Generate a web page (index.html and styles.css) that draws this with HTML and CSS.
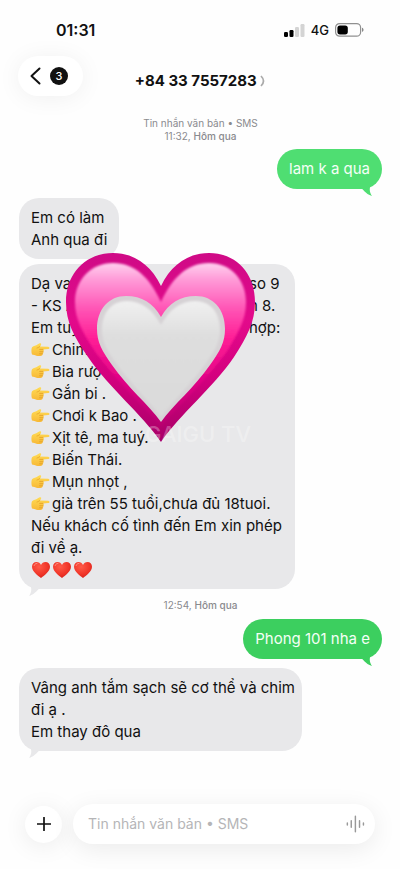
FILE: index.html
```html
<!DOCTYPE html>
<html lang="vi">
<head>
<meta charset="utf-8">
<meta name="viewport" content="width=device-width, initial-scale=1">
<title>Tin nhắn</title>
<link rel="stylesheet" href="styles.css">
</head>
<body>
<svg class="defs" aria-hidden="true">
  <defs>
    <linearGradient id="skin" x1="0" y1="0" x2="0" y2="1">
      <stop offset="0" stop-color="#ffdc55"/><stop offset="1" stop-color="#f8b936"/>
    </linearGradient>
    <radialGradient id="red" cx=".4" cy=".3" r=".8">
      <stop offset="0" stop-color="#ff5a48"/><stop offset=".6" stop-color="#f03528"/><stop offset="1" stop-color="#cf1d18"/>
    </radialGradient>
    <symbol id="hand" viewBox="0 0 19 16">
      <path d="M1 5.2C2.800 4 5 3.800 6.500 2.600C7.600 1.600 9 .9 9.900 1.400C10.800 2 9.700 3.400 8.900 4.400L17.200 4.700C18.900 4.900 18.900 7 17.200 7.100L12 7.400C13.100 7.900 13 9.300 12.100 9.700C12.700 10.500 12.300 11.500 11.500 11.800C11.900 12.700 11.300 13.600 10.300 13.700C7.500 14.200 4.700 13.600 3.200 12.900L1 12.600C.2 10.500 .2 7 1 5.200Z" fill="url(#skin)"/>
      <path d="M12 7.400H8.600M12.100 9.700H8.700M11.500 11.800H8.500M8.900 4.400C8 5.300 7 5.700 6 6" fill="none" stroke="#e09a22" stroke-width=".7" stroke-linecap="round"/>
    </symbol>
    <symbol id="love" viewBox="0 0 20 18">
      <path d="M10 17C7 14.800 1 10.700 1 5.800C1 3 3 1 5.500 1C7.600 1 9.200 2.200 10 4C10.800 2.200 12.400 1 14.500 1C17 1 19 3 19 5.800C19 10.700 13 14.800 10 17Z" fill="url(#red)"/>
      <path d="M3.200 4.400C3.700 3 4.700 2.500 5.900 2.500" fill="none" stroke="#ff9b8c" stroke-width="1" stroke-linecap="round"/>
    </symbol>
    <symbol id="tail" viewBox="0 0 16 14">
      <path d="M0 5C4 6 6 12 13 14C10 10 10 5 13 0H0Z" fill="currentColor"/>
    </symbol>
  </defs>
</svg>

<div class="phone">
  <div class="status">
    <time>01:31</time>
    <div class="signals">
      <svg class="bars" viewBox="0 0 21 13" aria-hidden="true">
        <rect x="0" y="8" width="4" height="5" rx="1.200"/>
        <rect x="5.500" y="6" width="4" height="7" rx="1.200"/>
        <rect class="off" x="11" y="3" width="4" height="10" rx="1.200"/>
        <rect class="off" x="16.500" y="0" width="4" height="13" rx="1.200"/>
      </svg>
      <span>4G</span>
      <svg class="battery" viewBox="0 0 29 14" aria-hidden="true">
        <rect x=".6" y=".6" width="25" height="12.600" rx="4" fill="none" stroke="#909090" stroke-width="1.200"/>
        <rect x="2.400" y="2.400" width="10.400" height="9" rx="2.600"/>
        <path d="M27 4.800C29 5.500 29 8.300 27 9Z" fill="#888"/>
      </svg>
    </div>
  </div>

  <header class="top">
    <button class="back" aria-label="Quay lại">
      <svg viewBox="0 0 11 18" aria-hidden="true"><path d="M9.500 1.500L1.500 9L9.500 16.500" fill="none" stroke="#111" stroke-width="2" stroke-linecap="round" stroke-linejoin="round"/></svg>
      <span class="count">3</span>
    </button>
    <a class="contact" href="#">+84 33 7557283
      <svg viewBox="0 0 5 12" aria-hidden="true"><path d="M1 1C4.500 4.500 4.500 7.500 1 11" fill="none" stroke="#aaa" stroke-width="1.700"/></svg>
    </a>
  </header>

  <main class="thread">
    <p class="stamp"><span>Tin nhắn văn bản • SMS</span><span>11:32, <b>Hôm qua</b></span></p>

    <div class="bubble sent light">lam k a qua<svg class="tail" aria-hidden="true"><use href="#tail"/></svg></div>

    <div class="bubble got">Em có làm<br>Anh qua đi</div>

    <div class="bubble got rules">
      <div class="split"><span>Dạ va</span><span>so 9</span></div>
      <div class="split"><span>- KS A</span><span>n 8.</span></div>
      <div class="split"><span>Em tuy</span><span>hợp:</span></div>
      <ul>
        <li><svg aria-hidden="true"><use href="#hand"/></svg>Chim</li>
        <li><svg aria-hidden="true"><use href="#hand"/></svg>Bia rượ</li>
        <li><svg aria-hidden="true"><use href="#hand"/></svg>Gắn bi .</li>
        <li><svg aria-hidden="true"><use href="#hand"/></svg>Chơi k Bao .</li>
        <li><svg aria-hidden="true"><use href="#hand"/></svg>Xịt tê, ma tuý.</li>
        <li><svg aria-hidden="true"><use href="#hand"/></svg>Biến Thái.</li>
        <li><svg aria-hidden="true"><use href="#hand"/></svg>Mụn nhọt ,</li>
        <li><svg aria-hidden="true"><use href="#hand"/></svg>già trên 55 tuổi,chưa đủ 18tuoi.</li>
      </ul>
      Nếu khách cố tình đến Em xin phép đi về ạ.
      <div class="loves">
        <svg aria-hidden="true"><use href="#love"/></svg>
        <svg aria-hidden="true"><use href="#love"/></svg>
        <svg aria-hidden="true"><use href="#love"/></svg>
      </div>
      <svg class="tail" aria-hidden="true"><use href="#tail"/></svg>

      <svg class="sticker" viewBox="0 0 190 190" aria-hidden="true">
        <defs>
          <linearGradient id="rim" x1="0" y1="0" x2="0" y2="1">
            <stop offset="0" stop-color="#cf0a86"/><stop offset=".35" stop-color="#e30a8b"/><stop offset=".65" stop-color="#d4007f"/><stop offset="1" stop-color="#a80068"/>
          </linearGradient>
          <linearGradient id="pink" x1="0" y1="0" x2="0" y2="1">
            <stop offset="0" stop-color="#ffd0ee"/><stop offset=".1" stop-color="#ff9bd8"/><stop offset=".28" stop-color="#ff55b5"/><stop offset=".46" stop-color="#ff1e96"/><stop offset=".68" stop-color="#e60688"/><stop offset="1" stop-color="#b80070"/>
          </linearGradient>
          <linearGradient id="silver" x1="0" y1="0" x2="0" y2="1">
            <stop offset="0" stop-color="#f0f0f0"/><stop offset=".3" stop-color="#dedede"/><stop offset="1" stop-color="#dadada"/>
          </linearGradient>
          <filter id="soft" x="-10%" y="-10%" width="120%" height="120%"><feGaussianBlur stdDeviation="1.200"/></filter>
          <filter id="haze" x="-10%" y="-10%" width="120%" height="120%"><feGaussianBlur stdDeviation=".5"/></filter>
        </defs>
        <path fill="url(#rim)" d="M95 189C75 160 44 136 22 104C8 84 0 69 0 49C0 20 20 0 47 0C68 0 85 12 95 33C105 12 122 0 143 0C170 0 189 20 189 49C189 69 181 84 168 104C146 136 115 160 95 189Z"/>
        <path filter="url(#soft)" fill="url(#pink)" d="M95 174C76 150 51 129 30 100C16 79 9 66 9 49C9 27 25 10 47 10C69 10 84 25 95 49C106 25 121 10 143 10C165 10 180 27 180 49C180 66 173 79 160 100C139 129 114 150 95 174Z"/>
        <path filter="url(#haze)" fill="#d6d2d5" d="M95 169C82 151 62 135 46 112C36 98 31 89 31 76C31 56 43 43 60 43C76 43 87 50 95 64C103 50 114 43 130 43C147 43 159 56 159 76C159 89 154 98 144 112C128 135 108 151 95 169Z"/>
        <path filter="url(#soft)" fill="url(#silver)" d="M95 164C82 147 65 131 50 110C41 98 36 88 36 77C36 59 46 48 61 48C76 48 87 57 95 72C103 57 114 48 129 48C144 48 154 59 154 77C154 88 149 98 140 110C125 131 108 147 95 164Z"/>
      </svg>
      <span class="mark">GAIGU TV</span>
    </div>

    <p class="stamp later"><span>12:54, <b>Hôm qua</b></span></p>

    <div class="bubble sent">Phong 101 nha e<svg class="tail" aria-hidden="true"><use href="#tail"/></svg></div>

    <div class="bubble got last">Vâng anh tắm sạch sẽ cơ thể và chim đi ạ .<br>Em thay đô qua<svg class="tail" aria-hidden="true"><use href="#tail"/></svg></div>
  </main>

  <form class="composer">
    <button class="add" type="button" aria-label="Thêm">
      <svg viewBox="0 0 14 14" aria-hidden="true"><path d="M7 .5V13.500M.5 7H13.500" stroke="#111" stroke-width="1.700" stroke-linecap="round"/></svg>
    </button>
    <div class="field">
      <input type="text" aria-label="Tin nhắn" placeholder="Tin nhắn văn bản • SMS">
      <button class="voice" type="button" aria-label="Ghi âm">
        <svg viewBox="0 0 17 16" aria-hidden="true"><path d="M1.200 7V9M4.700 5V11M8.400 1V15M12.100 5V11M15.600 7V9" stroke="#999" stroke-width="1.300" stroke-linecap="round"/></svg>
      </button>
    </div>
  </form>
</div>
</body>
</html>
```

FILE: styles.css
```css
* { box-sizing: border-box; }

body {
  margin: 0;
  background: #fefefe;
  color: #111;
  font: 15px/22px Inter, "Noto Sans", sans-serif;
}

p, ul { margin: 0; padding: 0; list-style: none; }

button {
  padding: 0;
  border: 0;
  background: none;
  font: inherit;
}

.defs { position: absolute; width: 0; height: 0; }

.phone {
  display: flex;
  flex-direction: column;
  min-height: 100vh;
}

.status {
  display: flex;
  justify-content: space-between;
  align-items: center;
  padding: 18px 36px 0 56px;
  font-size: 16px;
  line-height: 24px;
  font-weight: 600;
}

.signals {
  display: flex;
  align-items: center;
  gap: 6px;
  font-size: 13px;
  font-weight: 500;
}
.bars { width: 21px; height: 13px; }
.bars .off { fill: #d4d4d4; }
.battery { width: 29px; height: 14px; }

.top {
  display: grid;
  grid-template-columns: 1fr auto 1fr;
  align-items: center;
  padding: 14px 18px 0;
}

.back {
  display: flex;
  align-items: center;
  gap: 9px;
  width: 65px;
  height: 40px;
  padding-left: 12px;
  border-radius: 20px;
  background: #fff;
  box-shadow: 0 2px 24px rgba(0, 0, 0, 0.06);
}
.back svg { width: 11px; height: 18px; }

.count {
  width: 18px;
  height: 18px;
  border-radius: 50%;
  background: #111;
  color: #fff;
  font-size: 11px;
  line-height: 18px;
  font-weight: 500;
}

.contact {
  padding-top: 10px;
  color: #111;
  font-size: 15px;
  font-weight: 700;
  text-decoration: none;
}
.contact svg { width: 5px; height: 12px; vertical-align: -1px; }

.thread {
  display: flex;
  flex-direction: column;
  flex: 1;
  padding: 21px 18px 0 19px;
}

.stamp {
  display: flex;
  flex-direction: column;
  align-items: center;
  color: #8a8a8e;
  font-size: 10px;
  line-height: 13px;
}
.stamp b { font-weight: 500; }
.stamp.later { margin: 10px 0 7px; }

.bubble {
  position: relative;
  padding: 9px 12px;
  border-radius: 20px;
}

.sent {
  align-self: flex-end;
  background: #3ccf5f;
  color: #f4fff6;
}
.sent.light { margin: 6px 0 9px; background: #4fde72; }
.sent .tail { right: 7px; color: #3ccf5f; }
.sent.light .tail { color: #4fde72; }

.got {
  align-self: flex-start;
  max-width: 78%;
  padding-bottom: 8px;
  background: #e8e8ea;
}
.got + .got { margin-top: 5px; }
.got .tail { left: 7px; color: #e8e8ea; transform: scaleX(-1); }
.last { margin-top: 9px; padding-right: 6px; }

.tail {
  position: absolute;
  bottom: -7px;
  width: 16px;
  height: 14px;
}

.rules { width: 276px; max-width: 100%; }

.split { display: grid; grid-template-columns: 1fr 34px; white-space: nowrap; }

.rules li { display: flex; align-items: center; gap: 2px; white-space: nowrap; }
.rules li svg { width: 19px; height: 16px; }

.loves { display: flex; align-items: center; gap: 1px; height: 22px; }
.loves svg { width: 20px; height: 18px; }

.sticker {
  position: absolute;
  top: -11px;
  left: 47px;
  width: 190px;
  height: 190px;
}

.mark {
  position: absolute;
  top: 159px;
  left: 126px;
  color: rgba(255, 255, 255, 0.3);
  font-size: 22px;
  font-weight: 500;
}

.composer {
  display: flex;
  align-items: center;
  gap: 11px;
  padding: 0 25px 25px;
}

.add {
  display: grid;
  place-items: center;
  width: 37px;
  height: 37px;
  border-radius: 50%;
  background: #fff;
  box-shadow: 0 3px 24px rgba(0, 0, 0, 0.08);
}
.add svg { width: 14px; height: 14px; }

.field {
  display: flex;
  align-items: center;
  flex: 1;
  height: 40px;
  padding: 0 10px 0 15px;
  border-radius: 20px;
  background: #fff;
  box-shadow: 0 5px 24px rgba(0, 0, 0, 0.08);
}
.field input {
  flex: 1;
  min-width: 0;
  padding: 0;
  border: 0;
  outline: 0;
  background: none;
  font: inherit;
}
.field input::placeholder { color: #b5b5b7; opacity: 1; font-size: 14px; }
.voice { display: flex; }
.voice svg { width: 19px; height: 18px; }
```
